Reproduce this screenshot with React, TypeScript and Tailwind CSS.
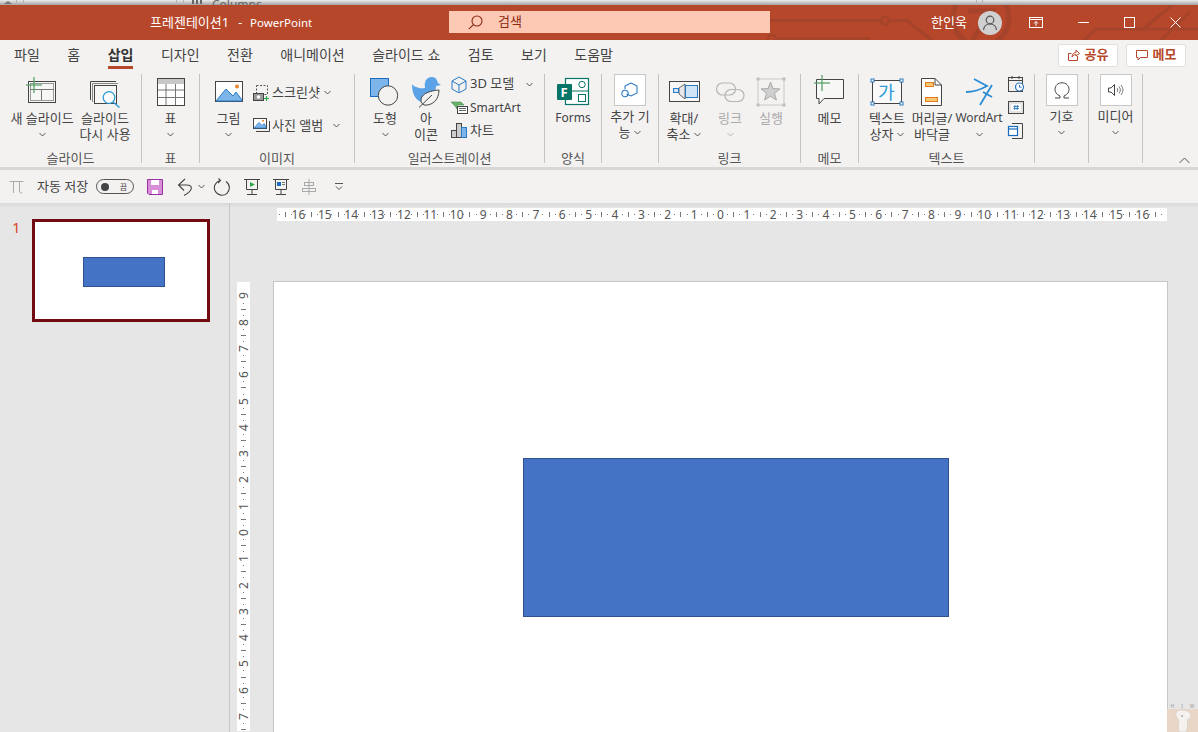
import React from 'react';

const dark = '#444444';
const blue = '#2b79c2';

function Chev({ className = 'text-[#555]' }: { className?: string }) {
  return (
    <svg width="7" height="5" viewBox="0 0 7 5" className={className}>
      <path d="M0.5 1 L3.5 4 L6.5 1" fill="none" stroke="currentColor" strokeWidth="1" />
    </svg>
  );
}

function Sep() {
  return <div className="w-px h-[89px] mt-[6px] bg-[#c4c3c1] shrink-0" />;
}

function Group({ width, label, children }: { width: string; label?: string; children: React.ReactNode }) {
  return (
    <div className={`${width} shrink-0 flex flex-col`}>
      <div className="h-[76px] mt-[6px] flex">{children}</div>
      <div className="h-[16px] leading-[16px] text-center text-[13px] text-[#555]">{label}</div>
    </div>
  );
}

function Big({
  width,
  lines,
  chev,
  icon,
  iconBox = 'h-[36px]',
  muted,
  textSize = 'text-[13px]',
}: {
  width: string;
  lines: string[];
  chev?: 'below' | 'inline';
  icon: React.ReactNode;
  iconBox?: string;
  muted?: boolean;
  textSize?: string;
}) {
  return (
    <div className={`${width} shrink-0 flex flex-col items-center ${textSize} leading-[16px] ${muted ? 'text-[#a9a9a9]' : 'text-[#444]'}`}>
      <div className={`${iconBox} flex justify-center items-start`}>{icon}</div>
      {lines.map((l, i) => (
        <div key={l} className="whitespace-nowrap flex items-center gap-[4px] h-[16px]">
          {l}
          {chev === 'inline' && i === lines.length - 1 && <Chev />}
        </div>
      ))}
      {chev === 'below' && (
        <div className="h-[16px] flex items-center">
          <Chev className={muted ? 'text-[#b5b5b5]' : 'text-[#555]'} />
        </div>
      )}
    </div>
  );
}

function SmallRow({
  icon,
  label,
  chevGap,
  textClass = 'text-[13px]',
}: {
  icon: React.ReactNode;
  label: string;
  chevGap?: string;
  textClass?: string;
}) {
  return (
    <div className="h-[18px] flex items-center text-[#444] whitespace-nowrap">
      <div className="w-[19px] flex items-center">{icon}</div>
      <span className={textClass}>{label}</span>
      {chevGap && (
        <span className={`${chevGap} flex`}>
          <Chev />
        </span>
      )}
    </div>
  );
}

function BoxIcon({ children }: { children: React.ReactNode }) {
  return (
    <div className="w-[32px] h-[32px] bg-white border border-[#c8c8c8] flex items-center justify-center text-[#444]">
      {children}
    </div>
  );
}

function Plus({ x, y }: { x: number; y: number }) {
  return (
    <g stroke="#5aa469" strokeWidth="1.3">
      <path d={`M${x - 8} ${y}H${x + 8}`} />
      <path d={`M${x} ${y - 8}V${y + 8}`} />
    </g>
  );
}

function TopStrip() {
  return (
    <div className="h-[5px] shrink-0 overflow-hidden bg-gradient-to-b from-[#ececec] to-[#a3a3a3] flex text-[#666]">
      <div className="w-[17px] border-r border-[#b5b5b5] pl-[4px] pt-[1px]">
        <div className="w-0 h-0 border-x-[4px] border-x-transparent border-b-[3px] border-b-[#777]" />
      </div>
      <div className="w-[7px] border-r border-[#b5b5b5]" />
      <div className="w-[153px] border-r border-[#b5b5b5]" />
      <div className="w-[7px] border-r border-[#b5b5b5]" />
      <div className="w-[793px] border-r border-[#b5b5b5] flex gap-[2px] pl-[8px]">
        <div className="w-[2px] h-[4px] bg-[#666]" />
        <div className="w-[2px] h-[4px] bg-[#666]" />
        <div className="w-[2px] h-[4px] bg-[#666]" />
        <div className="pl-[8px] text-[12px] leading-[12px] -mt-[1px]">Columns</div>
      </div>
      <div className="w-[6px] border-r border-[#b5b5b5]" />
    </div>
  );
}

function Circuit() {
  return (
    <svg className="absolute inset-0 text-[#a5432b]" width="1198" height="35" viewBox="0 5 1198 35" fill="none" stroke="currentColor" strokeWidth="3">
      <path d="M770 20.5 H881 M889 20.5 H907 L933 41" />
      <circle cx="885" cy="20.5" r="4" strokeWidth="2.5" />
      <circle cx="772" cy="39" r="4" strokeWidth="2.5" />
      <path d="M776 38.5 H870" />
      <circle cx="981" cy="18" r="28" strokeWidth="5" />
      <path d="M968 11 H992 L972 40" strokeWidth="5" />
      <path d="M1083 41 L1096 29 H1198 M1143 29 L1172 5 M1160 41 L1190 12" />
    </svg>
  );
}

function TitleBar() {
  return (
    <div className="relative h-[35px] shrink-0 bg-[#b7472a] overflow-hidden text-white">
      <Circuit />
      <div className="relative h-full flex items-center">
        <div className="ml-[150px] w-[299px] text-[13px] whitespace-nowrap flex items-center">
          프레젠테이션1
          <span className="ml-[9px] text-[12px]">-</span>
          <span className="ml-[8px] text-[11.5px]">PowerPoint</span>
        </div>
        <div className="w-[321px] h-[22px] -mt-[1px] bg-[#fdc9b5] flex items-center pl-[19px] text-[13px] text-[#8a2a12]">
          <svg width="15" height="15" viewBox="0 0 15 15" fill="none" stroke="#8a2a12" strokeWidth="1.1">
            <circle cx="9" cy="6" r="5" />
            <path d="M5.4 9.6 L0.8 14.2" />
          </svg>
          <span className="ml-[15px]">검색</span>
        </div>
        <div className="ml-[161px] w-[36px] text-[13px] whitespace-nowrap">한인욱</div>
        <div className="ml-[11px] w-[24px] h-[24px] rounded-full bg-[#d0d0d0] flex items-center justify-center">
          <svg width="16" height="16" viewBox="0 0 16 16" fill="none" stroke="#555" strokeWidth="1.2">
            <circle cx="8" cy="5" r="3.8" />
            <path d="M1.5 15 C2 10.5 5 9 8 9 C11 9 14 10.5 14.5 15" />
          </svg>
        </div>
        <svg className="ml-[27px]" width="14" height="11" viewBox="0 0 14 11" fill="none" stroke="#fff" strokeWidth="1">
          <rect x="0.5" y="0.5" width="13" height="10" />
          <path d="M0.5 2.5 H13.5 M7 9 V4.5 M5 6.5 L7 4.5 L9 6.5" />
        </svg>
        <svg className="ml-[35px]" width="11" height="1" viewBox="0 0 11 1">
          <rect width="11" height="1" fill="#fff" />
        </svg>
        <svg className="ml-[35px]" width="11" height="11" viewBox="0 0 11 11" fill="none" stroke="#fff" strokeWidth="1">
          <rect x="0.5" y="0.5" width="10" height="10" />
        </svg>
        <svg className="ml-[35px]" width="11" height="11" viewBox="0 0 11 11" fill="none" stroke="#fff" strokeWidth="1">
          <path d="M0.5 0.5 L10.5 10.5 M10.5 0.5 L0.5 10.5" />
        </svg>
      </div>
    </div>
  );
}

function Tabs() {
  const tabs = ['파일', '홈', '삽입', '디자인', '전환', '애니메이션', '슬라이드 쇼', '검토', '보기', '도움말'];
  return (
    <div className="h-[28px] shrink-0 bg-[#f3f2f1] flex items-center pl-[14px] pr-[12px] text-[14px] text-[#444]">
      <div className="flex gap-[27.5px]">
        {tabs.map((t) =>
          t === '삽입' ? (
            <div key={t} className="relative font-bold text-[#333] whitespace-nowrap">
              {t}
              <div className="absolute left-0 right-0 top-[22px] h-[3px] bg-[#b7472a]" />
            </div>
          ) : (
            <div key={t} className="whitespace-nowrap">
              {t}
            </div>
          ),
        )}
      </div>
      <div className="ml-auto flex gap-[8px] mt-[2px]">
        <div className="w-[60px] h-[23px] bg-white border border-[#e1dfdd] rounded-[2px] flex items-center justify-center gap-[5px] text-[13px] font-bold text-[#b7472a]">
          <svg width="12" height="12" viewBox="0 0 12 12" fill="none" stroke="#b7472a" strokeWidth="1">
            <path d="M9.5 7 V11.5 H0.5 V4.5 H3.5 M4 8 C4 5 6 3.5 8 3.5 V1 L11.5 4.5 L8 7 V5.5 C6.5 5.5 5 6.5 4 8Z" />
          </svg>
          공유
        </div>
        <div className="w-[60px] h-[23px] bg-white border border-[#e1dfdd] rounded-[2px] flex items-center justify-center gap-[5px] text-[13px] font-bold text-[#b7472a]">
          <svg width="12" height="12" viewBox="0 0 12 12" fill="none" stroke="#b7472a" strokeWidth="1">
            <path d="M0.5 1.5 H11.5 V8.5 H4.5 L2 11 V8.5 H0.5Z" />
          </svg>
          메모
        </div>
      </div>
    </div>
  );
}

function Ribbon() {
  return (
    <div className="h-[99px] shrink-0 bg-[#f3f2f1] flex">
      <Group width="w-[141px]" label="슬라이드">
        <div className="w-[5px]" />
        <Big
          width="w-[74px]"
          lines={['새 슬라이드']}
          chev="below"
          icon={
            <svg width="32" height="36" viewBox="26 74 32 36" fill="none">
              <rect x="28.5" y="81.5" width="27" height="21" stroke={dark} fill="#f7f7f6" />
              <rect x="30.5" y="83.5" width="23" height="17" stroke="#999" />
              <path d="M30 89.5 H54 M41.5 89.5 V100" stroke="#777" />
              <Plus x={34} y={85} />
            </svg>
          }
        />
        <Big
          width="w-[52px]"
          lines={['슬라이드', '다시 사용']}
          icon={
            <svg width="32" height="36" viewBox="90 74 32 36" fill="none">
              <path d="M91.5 100 V81.5 H117" stroke={dark} />
              <path d="M93.5 102 V83.5 H119" stroke="#888" />
              <rect x="95.5" y="85.5" width="22" height="18" stroke={dark} fill="#f7f7f6" />
              <circle cx="110" cy="97.5" r="5.8" stroke="#2e9bd6" strokeWidth="1.3" fill="#fff" />
              <path d="M114 102 L120.5 107.5" stroke="#2e9bd6" strokeWidth="1.5" />
            </svg>
          }
        />
      </Group>
      <Sep />
      <Group width="w-[57px]" label="표">
        <Big
          width="w-[57px]"
          lines={['표']}
          chev="below"
          icon={
            <svg width="32" height="36" viewBox="155 74 32 36" fill="none">
              <rect x="157.5" y="78.5" width="27" height="27" stroke={dark} fill="#fff" />
              <rect x="158" y="79" width="26" height="5" fill="#c8c8c8" />
              <path d="M158 90 H184 M158 97.5 H184 M166 84 V105 M175.5 84 V105" stroke="#777" />
            </svg>
          }
        />
      </Group>
      <Sep />
      <Group width="w-[154px]" label="이미지">
        <div className="w-[4px]" />
        <Big
          width="w-[49px]"
          lines={['그림']}
          chev="below"
          icon={
            <svg width="32" height="36" viewBox="213 74 32 36" fill="none">
              <rect x="215.5" y="81.5" width="27" height="20" stroke={dark} fill="#fff" />
              <path d="M216 101 L226 89 L233 96 L236 92 L242 100 V101Z" fill="#7cb5ea" stroke={blue} />
              <circle cx="237" cy="86.5" r="2" fill="#e8872b" />
            </svg>
          }
        />
        <div className="flex flex-col gap-[15px] pt-[9px]">
          <SmallRow
            label="스크린샷"
            textClass="text-[13px] pt-[2px]"
            chevGap="ml-[4px]"
            icon={
              <svg width="16" height="18" viewBox="253 83 16 18" fill="none">
                <rect x="256.5" y="85.5" width="11" height="9" stroke="#555" strokeDasharray="2 1.5" />
                <rect x="253.5" y="93.5" width="10" height="7" fill="#999" stroke="#444" />
                <circle cx="258.5" cy="97" r="1.8" fill="#fff" />
                <path d="M264 98.5 H269 M266.5 96 V101" stroke="#2ba84a" strokeWidth="1.2" />
              </svg>
            }
          />
          <SmallRow
            label="사진 앨범"
            textClass="text-[13px] pt-[2px]"
            chevGap="ml-[10px]"
            icon={
              <svg width="18" height="18" viewBox="253 116 18 18" fill="none">
                <path d="M256 131.5 H269.5 V121" stroke={dark} />
                <rect x="253.5" y="118.5" width="13" height="10" stroke={dark} fill="#fff" />
                <path d="M254 128 L259 122.5 L262 125.5 L264 123.5 L266 127 V128Z" fill="#7cb5ea" stroke={blue} strokeWidth="0.8" />
                <circle cx="263" cy="120.8" r="1" fill="#e8872b" />
              </svg>
            }
          />
        </div>
      </Group>
      <Sep />
      <Group width="w-[189px]" label="일러스트레이션">
        <div className="w-[9px]" />
        <Big
          width="w-[42px]"
          lines={['도형']}
          chev="below"
          icon={
            <svg width="32" height="36" viewBox="369 74 32 36" fill="none">
              <rect x="370.5" y="78.5" width="18" height="18" fill="#7db5ea" stroke="#1c6cbd" />
              <circle cx="388" cy="95.5" r="9.7" fill="#f3f2f1" stroke={dark} />
            </svg>
          }
        />
        <Big
          width="w-[40px]"
          lines={['아', '이콘']}
          icon={
            <svg width="32" height="36" viewBox="410 74 32 36" fill="none">
              <path d="M412 84 C414 87 420 89 425 88 C424 82 426 77 432 77 C436 77 437 80 438 83 L441 85 L436 86 C436 90 435 93 432 95 L424 102 C417 102 412 96 412 84Z" fill="#5ba3e6" />
              <path d="M421.5 103 C419 96 426 91 439 90 C439 100 432 106 424 105 Z" fill="#f3f2f1" stroke={dark} />
              <path d="M419 107.5 L432 95" stroke={dark} />
            </svg>
          }
        />
        <div className="flex flex-col gap-[5px] pt-[1px] ml-[5px]">
          <SmallRow
            label="3D 모델"
            chevGap="ml-[12px]"
            icon={
              <svg width="16" height="18" viewBox="450 75 16 18" fill="none" stroke={blue}>
                <path d="M458 77 L465 81 V89 L458 93 L451 89 V81Z" />
                <path d="M451 81 L458 85 L465 81 M458 85 V93" />
              </svg>
            }
          />
          <SmallRow
            label="SmartArt"
            textClass="text-[12px] pt-[1px]"
            icon={
              <svg width="17" height="18" viewBox="450 98 17 18" fill="none">
                <path d="M450 102 H460 L463 105 H456 V109 L454 106Z" fill="#6cb36c" stroke="#3e8e4e" strokeWidth="0.6" />
                <rect x="456.5" y="106.5" width="10" height="7" fill="#fff" stroke={dark} />
                <path d="M458 108.5 H465 M458 110.5 H465" stroke="#666" />
              </svg>
            }
          />
          <SmallRow
            label="차트"
            textClass="text-[13px] pt-[1px]"
            icon={
              <svg width="17" height="18" viewBox="450 121 17 18" fill="none">
                <rect x="450.5" y="130.5" width="5" height="7" fill="#ccc" stroke={dark} />
                <rect x="455.5" y="123.5" width="5" height="14" fill="#ccc" stroke={dark} />
                <rect x="460.5" y="127.5" width="5" height="10" fill="#7db5ea" stroke={blue} />
              </svg>
            }
          />
        </div>
      </Group>
      <Sep />
      <Group width="w-[56px]" label="양식">
        <Big
          width="w-[56px]"
          lines={['Forms']}
          textSize="text-[12px]"
          icon={
            <svg width="36" height="36" viewBox="555 74 36 36" fill="none">
              <rect x="565.5" y="78.5" width="23" height="26" stroke="#077568" strokeWidth="1.2" fill="#fff" />
              <path d="M566 91 H588" stroke="#077568" />
              <circle cx="582" cy="84.5" r="3.2" stroke="#077568" />
              <rect x="578.5" y="94.5" width="7" height="7" stroke="#077568" />
              <rect x="557" y="84" width="15" height="16" rx="1" fill="#077568" />
              <text x="560.5" y="97" fontSize="13" fontWeight="700" fill="#fff" fontFamily="'Noto Sans', sans-serif">
                F
              </text>
            </svg>
          }
        />
      </Group>
      <Sep />
      <Group width="w-[56px]">
        <Big
          width="w-[56px]"
          lines={['추가 기', '능']}
          chev="inline"
          iconBox="h-[34px]"
          icon={
            <BoxIcon>
              <svg width="22" height="22" viewBox="0 0 22 22" fill="none" stroke={blue} strokeWidth="1.1">
                <path d="M12 4 L18 7 V14 L12 17 L7.5 15 M6 10 V7 L12 4" />
                <circle cx="6" cy="14.5" r="3.2" />
              </svg>
            </BoxIcon>
          }
        />
      </Group>
      <Sep />
      <Group width="w-[141px]" label="링크">
        <div className="w-[3px]" />
        <Big
          width="w-[44px]"
          lines={['확대/', '축소']}
          chev="inline"
          icon={
            <svg width="36" height="36" viewBox="671 74 36 36" fill="none">
              <rect x="674.5" y="81.5" width="30" height="20" stroke={dark} fill="#f7f7f6" />
              <path d="M684 88 L690 84 V99 L684 94Z" fill="#e8e8e8" stroke="#666" />
              <rect x="678.5" y="88.5" width="5" height="4" stroke={blue} fill="#cfe4f7" />
              <rect x="690.5" y="85.5" width="12" height="12" stroke={blue} fill="#cfe4f7" />
            </svg>
          }
        />
        <Big
          width="w-[48px]"
          lines={['링크']}
          chev="below"
          muted
          icon={
            <svg width="32" height="36" viewBox="714 74 32 36" fill="none" stroke="#b5b5b5" strokeWidth="1.2">
              <rect x="716.5" y="83" width="19" height="12" rx="6" />
              <rect x="725" y="89.5" width="19" height="12" rx="6" />
            </svg>
          }
        />
        <Big
          width="w-[34px]"
          lines={['실행']}
          muted
          icon={
            <svg width="32" height="36" viewBox="756 74 32 36" fill="none">
              <rect x="759" y="79" width="26" height="26" stroke="#c8c8c8" />
              <path d="M771.5 82 L774 88.6 L781 88.9 L775.5 93.3 L777.4 100 L771.5 96.2 L765.6 100 L767.5 93.3 L762 88.9 L769 88.6Z" fill="#cfcfcf" stroke="#a9a9a9" />
              <g fill="#bdbdbd">
                <rect x="757.5" y="77.5" width="3" height="3" />
                <rect x="783.5" y="77.5" width="3" height="3" />
                <rect x="757.5" y="103.5" width="3" height="3" />
                <rect x="783.5" y="103.5" width="3" height="3" />
              </g>
            </svg>
          }
        />
      </Group>
      <Sep />
      <Group width="w-[57px]" label="메모">
        <Big
          width="w-[57px]"
          lines={['메모']}
          icon={
            <svg width="34" height="36" viewBox="813 74 34 36" fill="none">
              <path d="M816.5 79.5 H843.5 V98.5 H824 L819 104 V98.5 H816.5Z" stroke={dark} fill="#f7f7f6" />
              <Plus x={822} y={83} />
            </svg>
          }
        />
      </Group>
      <Sep />
      <Group width="w-[175px]" label="텍스트">
        <div className="w-[4px]" />
        <Big
          width="w-[48px]"
          lines={['텍스트', '상자']}
          chev="inline"
          icon={
            <svg width="34" height="36" viewBox="871 74 34 36" fill="none">
              <rect x="873.5" y="80.5" width="29" height="23" stroke={dark} fill="#fafafa" />
              <text x="879" y="99" fontSize="18" fill="#2b9bd6" fontFamily="'Noto Sans CJK KR', sans-serif">
                가
              </text>
              <g fill="#fff" stroke={blue}>
                <rect x="872" y="79" width="3" height="3" />
                <rect x="901" y="79" width="3" height="3" />
                <rect x="872" y="102" width="3" height="3" />
                <rect x="901" y="102" width="3" height="3" />
              </g>
            </svg>
          }
        />
        <Big
          width="w-[42px]"
          lines={['머리글/', '바닥글']}
          icon={
            <svg width="26" height="36" viewBox="919 74 26 36" fill="none">
              <path d="M921.5 78.5 H935 L941.5 85 V105.5 H921.5Z" stroke={dark} fill="#fff" />
              <path d="M935 78.5 V85 H941.5" stroke={dark} />
              <rect x="925.5" y="82.5" width="8" height="4" fill="#f7c873" stroke="#e07b1f" />
              <rect x="925.5" y="97.5" width="12" height="4" fill="#f7c873" stroke="#e07b1f" />
            </svg>
          }
        />
        <Big
          width="w-[52px]"
          lines={['WordArt']}
          textSize="text-[12px]"
          chev="below"
          icon={
            <svg width="30" height="36" viewBox="965 74 30 36" fill="none" stroke="#2b8cd6" strokeWidth="1.8">
              <path d="M975 79 L988 86 C981 90 974 92 967 92 M993 85 L981 105 M984 92 L993 97" />
            </svg>
          }
        />
        <div className="ml-[1px] flex flex-col pt-[1px] gap-[7px]">
          <svg width="20" height="18" viewBox="1006 75 20 18" fill="none">
            <rect x="1008.5" y="77.5" width="14" height="14" stroke={dark} />
            <path d="M1008.5 80.5 H1022.5 M1012 76 V79 M1019 76 V79" stroke={dark} />
            <circle cx="1019.5" cy="87" r="4" fill="#fff" stroke={blue} strokeWidth="1.2" />
            <path d="M1019.5 85 V87.2 H1021.5" stroke={blue} />
          </svg>
          <svg width="20" height="15" viewBox="1006 99 20 15" fill="none">
            <rect x="1008.5" y="100.5" width="15" height="12" stroke={dark} fill="#e4e4e4" />
            <rect x="1011" y="103" width="10" height="7" fill="#fff" />
            <path d="M1015 104 L1014.5 109 M1017.5 104 L1017 109 M1013.5 105.5 H1019 M1013.5 107.5 H1019" stroke={blue} strokeWidth="0.9" />
          </svg>
          <svg width="20" height="18" viewBox="1006 121 20 18" fill="none">
            <path d="M1012 122.5 H1022.5 V137.5 H1012" stroke={dark} />
            <rect x="1008.5" y="125.5" width="9" height="9" stroke="#1c6cbd" strokeWidth="1.2" fill="#fff" />
            <path d="M1008.5 128 H1017.5" stroke="#1c6cbd" strokeWidth="1.2" />
          </svg>
        </div>
      </Group>
      <Sep />
      <Group width="w-[53px]">
        <Big
          width="w-[53px]"
          lines={['기호']}
          chev="below"
          iconBox="h-[34px]"
          icon={
            <BoxIcon>
              <svg width="16" height="17" viewBox="0 0 16 17" fill="none" stroke="#444" strokeWidth="1">
                <path d="M1 16 H6 V14 C2.5 12.5 1 10 1 7.5 C1 3.5 4 0.8 8 0.8 C12 0.8 15 3.5 15 7.5 C15 10 13.5 12.5 10 14 V16 H15" />
              </svg>
            </BoxIcon>
          }
        />
      </Group>
      <Sep />
      <Group width="w-[53px]">
        <Big
          width="w-[53px]"
          lines={['미디어']}
          chev="below"
          iconBox="h-[34px]"
          icon={
            <BoxIcon>
              <svg width="16" height="14" viewBox="0 0 16 14" fill="none" stroke="#444">
                <path d="M0.5 5 H3 L6.5 1.5 V12.5 L3 9 H0.5Z" />
                <path d="M9 5 C10 6 10 8 9 9 M11 3.5 C12.8 5.5 12.8 8.5 11 10.5 M13 2 C15.5 5 15.5 9 13 12" stroke="#777" />
              </svg>
            </BoxIcon>
          }
        />
      </Group>
      <Sep />
      <div className="flex-1 flex items-end justify-end pr-[8px] pb-[3px]">
        <svg width="11" height="7" viewBox="0 0 11 7" fill="none" stroke="#555">
          <path d="M0.5 6 L5.5 1 L10.5 6" />
        </svg>
      </div>
    </div>
  );
}

function Qat() {
  return (
    <div className="h-[36px] shrink-0 border-t-[3px] border-[#d9d7d5] bg-[#f3f2f1] flex items-center text-[13px] text-[#444]">
      <svg className="ml-[9px]" width="15" height="14" viewBox="0 0 15 14" fill="none" stroke="#aaa">
        <path d="M0.5 1.5 H14.5 M4.5 1.5 V13 M10.5 1.5 V11 C10.5 12.5 11.5 13 13 13" />
      </svg>
      <span className="ml-[13px] w-[52px] whitespace-nowrap">자동 저장</span>
      <div className="ml-[7px] w-[38px] h-[15px] rounded-full border border-[#555] flex items-center justify-between pl-[4px] pr-[6px]">
        <div className="w-[8px] h-[8px] rounded-full bg-[#444]" />
        <span className="text-[8px] leading-none">끔</span>
      </div>
      <svg className="ml-[13px]" width="16" height="16" viewBox="0 0 16 16">
        <path d="M0.5 0.5 H15.5 V15.5 H2 L0.5 14Z" fill="#d88fd8" stroke="#9b30a0" />
        <rect x="4" y="1" width="8" height="5" fill="#fff" />
        <rect x="5" y="11" width="6" height="4" fill="#fff" />
      </svg>
      <svg className="ml-[13px]" width="18" height="20" viewBox="0 0 18 20" fill="none" stroke="#444" strokeWidth="1.1">
        <path d="M9 2 L2.5 8 L8 13.5 M2.5 8 H10 C17 7.5 18 13 8 18.5" />
      </svg>
      <span className="ml-[4px] flex">
        <Chev />
      </span>
      <svg className="ml-[8px]" width="18" height="18" viewBox="0 0 18 18" fill="none" stroke="#444" strokeWidth="1.1">
        <path d="M7 2.5 A7.5 7.5 0 1 0 13 3.5 M5.5 0.5 L7.5 2.5 L5 5" />
      </svg>
      <svg className="ml-[13px]" width="16" height="16" viewBox="0 0 16 16" fill="none" stroke="#444">
        <path d="M0 0.5 H16 M2.5 0.5 V10.5 H13.5 V0.5 M8 10.5 V15 M3 15.5 H13" />
        <path d="M6 3 L11 5.5 L6 8Z" fill="#2ba84a" stroke="none" />
      </svg>
      <svg className="ml-[13px]" width="16" height="16" viewBox="0 0 16 16" fill="none" stroke="#444">
        <path d="M0 0.5 H16 M2.5 0.5 V10.5 H13.5 V0.5 M8 10.5 V15 M3 15.5 H13" />
        <rect x="4" y="3" width="4" height="4" fill="#1c6cbd" stroke="none" />
        <path d="M9 3.5 H12 M9 5.5 H12" stroke="#777" />
      </svg>
      <svg className="ml-[13px]" width="14" height="16" viewBox="0 0 14 16" fill="none" stroke="#aaa">
        <path d="M7 0 V16" />
        <rect x="2.5" y="3.5" width="9" height="3" />
        <rect x="0.5" y="9.5" width="13" height="3" />
      </svg>
      <svg className="ml-[19px]" width="8" height="8" viewBox="0 0 8 8" fill="none" stroke="#555">
        <path d="M0 0.5 H8 M1 3.5 L4 6.5 L7 3.5" />
      </svg>
    </div>
  );
}

function HTicks() {
  return (
    <div className="w-[13.19px] shrink-0 flex items-center justify-between">
      <div className="w-px h-px bg-[#777]" />
      <div className="w-px h-[5px] bg-[#777]" />
      <div className="w-px h-px bg-[#777]" />
    </div>
  );
}

function HRuler() {
  const nums = Array.from({ length: 33 }, (_, i) => Math.abs(i - 16));
  return (
    <div className="h-[13px] w-[890px] bg-white flex items-center pl-[1.7px] text-[12px] leading-[13px] text-[#555]">
      <HTicks />
      {nums.map((n, i) => (
        <React.Fragment key={i}>
          <div className="w-[13.19px] shrink-0 text-center whitespace-nowrap flex justify-center">{n}</div>
          <HTicks />
        </React.Fragment>
      ))}
    </div>
  );
}

function VTicks() {
  return (
    <div className="h-[13.15px] shrink-0 flex flex-col items-center justify-between">
      <div className="w-px h-px bg-[#777]" />
      <div className="w-[5px] h-px bg-[#777]" />
      <div className="w-px h-px bg-[#777]" />
    </div>
  );
}

function VRuler() {
  const nums = [9, 8, 7, 6, 5, 4, 3, 2, 1, 0, 1, 2, 3, 4, 5, 6, 7];
  return (
    <div className="w-[13px] h-[449px] bg-white flex flex-col items-center pt-[7.4px] text-[12px] leading-[13px] text-[#555]">
      {nums.map((n, i) => (
        <React.Fragment key={i}>
          <div className="h-[13.15px] shrink-0 flex items-center justify-center">
            <span className="-rotate-90 inline-block">{n}</span>
          </div>
          <VTicks />
        </React.Fragment>
      ))}
    </div>
  );
}

function Sidebar() {
  return (
    <div className="w-[230px] shrink-0 border-r border-[#c6c6c6] flex items-start pt-[16px] pl-[12px]">
      <span className="w-[20px] text-[15px] leading-[16px] text-[#d9482b]">1</span>
      <div className="w-[178px] h-[103px] border-[3px] border-[#720a12] bg-white flex items-center justify-center">
        <div className="w-[82px] h-[30px] bg-[#4472c4] border border-[#2f528f] mt-[3px] ml-[6px]" />
      </div>
    </div>
  );
}

function Canvas() {
  return (
    <div className="flex-1 min-w-0 flex flex-col">
      <div className="pl-[47px] pt-[5px]">
        <HRuler />
      </div>
      <div className="flex mt-[61px] pl-[7px]">
        <VRuler />
        <div className="relative ml-[23px] -mt-[1px] w-[895px] h-[460px] bg-white border border-[#c6c6c6]">
          <div className="absolute left-[249px] top-[176px] w-[426px] h-[159px] bg-[#4472c4] border border-[#2f528f]" />
        </div>
      </div>
    </div>
  );
}

export default function App() {
  return (
    <div className="relative w-[1198px] h-[732px] overflow-hidden flex flex-col bg-[#e6e6e6] font-['Noto_Sans','Noto_Sans_CJK_KR',sans-serif]">
      <TopStrip />
      <TitleBar />
      <Tabs />
      <Ribbon />
      <Qat />
      <div className="flex-1 min-h-0 flex bg-gradient-to-b from-[#d9d9d9] to-[#e6e6e6] to-[5px]">
        <Sidebar />
        <Canvas />
      </div>
      <div className="absolute right-0 bottom-0 w-[31px] h-[28px]">
        <div className="h-[5px] flex justify-around text-[5px] leading-[5px] text-[#999]">
          <span>H</span>
          <span>I</span>
          <span>W</span>
        </div>
        <div className="h-[23px] bg-[#e9d6c6] flex justify-center">
          <svg width="20" height="23" viewBox="0 0 20 23" fill="#f4f1ee" stroke="#c9c4bf" strokeWidth="0.5">
            <path d="M4 2 C8 0 14 1 17 4 C19 7 17 10 14 11 C15 15 15 19 13 23 H6 C5 18 5 14 6 11 C3 9 2 5 4 2Z" />
            <circle cx="9" cy="7" r="1" fill="#aaa" stroke="none" />
          </svg>
        </div>
      </div>
    </div>
  );
}
